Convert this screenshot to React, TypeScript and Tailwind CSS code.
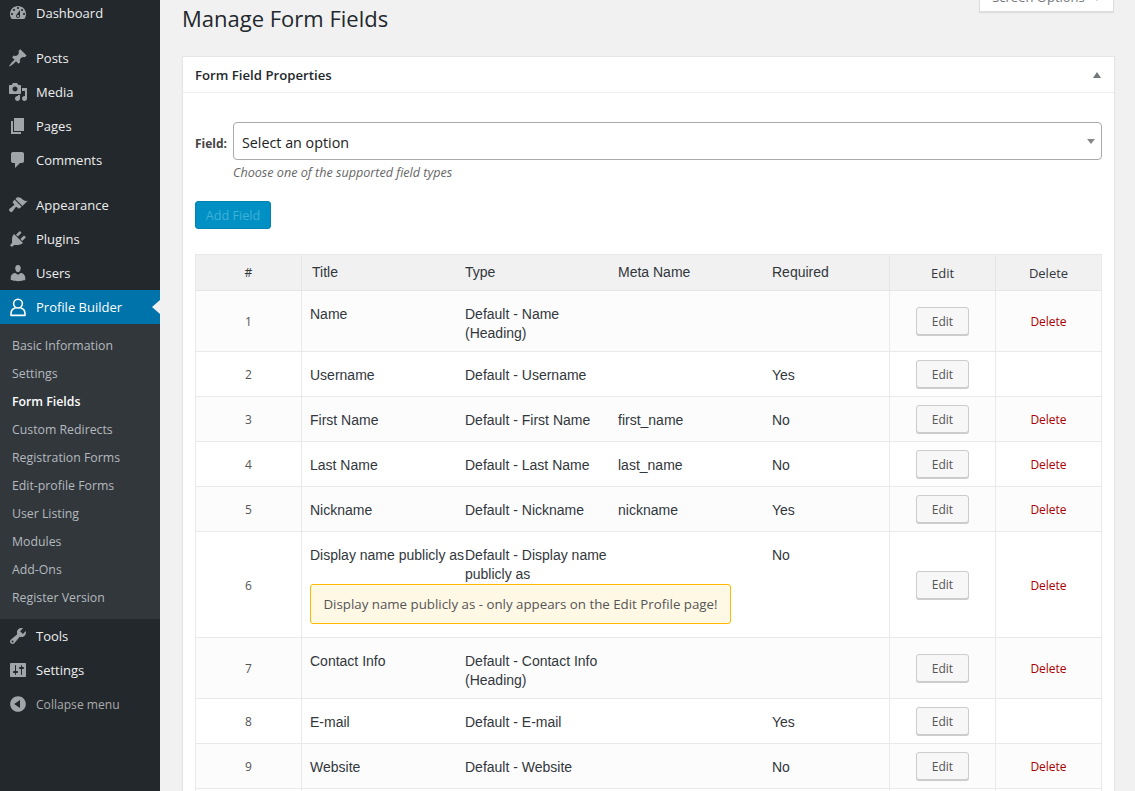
const icons = {
  dashboard: "M3.76 16h12.48c1.1-1.37 1.76-3.11 1.76-5 0-4.42-3.58-8-8-8s-8 3.58-8 8c0 1.89.66 3.63 1.76 5zM10 4c.55 0 1 .45 1 1s-.45 1-1 1-1-.45-1-1 .45-1 1-1zM6 6c.55 0 1 .45 1 1s-.45 1-1 1-1-.45-1-1 .45-1 1-1zm8 0c.55 0 1 .45 1 1s-.45 1-1 1-1-.45-1-1 .45-1 1-1zm-5.37 5.55L12 7v6c0 1.1-.9 2-2 2s-2-.9-2-2c0-.57.24-1.08.63-1.45zM4 10c.55 0 1 .45 1 1s-.45 1-1 1-1-.45-1-1 .45-1 1-1zm12 0c.55 0 1 .45 1 1s-.45 1-1 1-1-.45-1-1 .45-1 1-1zm-5 3c0-.55-.45-1-1-1s-1 .45-1 1 .45 1 1 1 1-.45 1-1z",
  posts: "M10.44 3.02l1.82-1.82 6.36 6.35-1.83 1.82c-1.05-.68-2.48-.57-3.41.36l-.75.75c-.92.93-1.04 2.35-.35 3.41l-1.83 1.82-2.41-2.41-2.8 2.79c-.42.42-3.38 2.71-3.8 2.29s1.86-3.39 2.28-3.81l2.79-2.79L4.1 9.36l1.83-1.82c1.05.69 2.48.57 3.4-.36l.75-.75c.93-.92 1.05-2.35.36-3.41z",
  media: "M13 11V4c0-.55-.45-1-1-1h-1.67L9 1H5L3.67 3H2c-.55 0-1 .45-1 1v7c0 .55.45 1 1 1h10c.55 0 1-.45 1-1zM7 4.5c1.38 0 2.5 1.12 2.5 2.5S8.38 9.5 7 9.5 4.5 8.38 4.5 7 5.62 4.5 7 4.5zM14 6h5v10.5c0 1.38-1.12 2.5-2.5 2.5S14 17.88 14 16.5s1.12-2.5 2.5-2.5c.17 0 .34.02.5.05V9h-3V6zm-4 8.05V13h2v3.5c0 1.38-1.12 2.5-2.5 2.5S7 17.88 7 16.5 8.12 14 9.5 14c.17 0 .34.02.5.05z",
  pages: "M6 15V2h10v13H6zm-1 1h8v2H3V5h2v11z",
  comments: "M5 2h9c1.1 0 2 .9 2 2v7c0 1.1-.9 2-2 2h-2l-5 5v-5H5c-1.1 0-2-.9-2-2V4c0-1.1.9-2 2-2z",
  appearance: "M14.48 11.06L7.41 3.99l1.5-1.5c.5-.56 2.3-.47 3.51.32 1.21.8 1.43 1.28 2.91 2.1 1.18.64 2.45 1.26 4.45.85zm-.71.71L6.7 4.7 4.93 6.47c-.39.39-.39 1.02 0 1.41l1.06 1.06c.39.39.39 1.03 0 1.42-.6.6-1.43 1.11-2.21 1.69-.35.26-2.2 1.7-2.4 1.9-.5.5-.5 1.4 0 1.9l.9.9c.5.5 1.4.5 1.9 0 .2-.2 1.5-1.9 1.8-2.3.58-.78 1.08-1.6 1.69-2.21.39-.39 1.02-.39 1.41 0l1.06 1.06c.39.39 1.02.39 1.41 0z",
  plugins: "M13.11 4.36L9.87 7.6 8 5.73l3.24-3.24c.35-.34 1.05-.2 1.56.32.52.51.66 1.21.31 1.55zm-8 1.77l.91-1.12 9.01 9.01-1.19.84c-.71.71-2.63 1.16-3.82 1.16H6.14L4.9 17.26c-.59.59-1.54.59-2.12 0-.59-.58-.59-1.53 0-2.12l1.24-1.24v-3.88c0-1.13.4-3.19 1.09-3.89zm7.26 3.97l3.24-3.24c.34-.35 1.04-.21 1.55.31.52.51.66 1.21.31 1.55l-3.24 3.25z",
  users: "M10 9.25c-2.27 0-2.73-3.44-2.73-3.44C7 4.02 7.82 2 9.97 2c2.16 0 2.98 2.02 2.71 3.81 0 0-.41 3.44-2.68 3.44zm0 2.57L12.72 10c2.39 0 4.52 2.33 4.52 4.53v2.49s-3.65 1.13-7.24 1.13c-3.65 0-7.24-1.13-7.24-1.13v-2.49c0-2.25 1.94-4.48 4.47-4.48z",
  tools: "M16.68 9.77c-1.34 1.34-3.3 1.67-4.95.99l-5.41 6.52c-.99.99-2.59.99-3.58 0s-.99-2.59 0-3.57l6.52-5.42c-.68-1.65-.35-3.61.99-4.95 1.28-1.28 3.12-1.62 4.72-1.06l-2.89 2.89 2.82 2.82 2.86-2.87c.53 1.58.18 3.39-1.08 4.65zM3.81 16.21c.4.39 1.04.39 1.43 0 .4-.4.4-1.04 0-1.43-.39-.4-1.03-.4-1.43 0-.39.39-.39 1.03 0 1.43z",
  settings: "M18 16V4c0-.55-.45-1-1-1H3c-.55 0-1 .45-1 1v12c0 .55.45 1 1 1h14c.55 0 1-.45 1-1zM8 11h1c.55 0 1 .45 1 1s-.45 1-1 1H8v1.5c0 .28-.22.5-.5.5s-.5-.22-.5-.5V13H6c-.55 0-1-.45-1-1s.45-1 1-1h1V5.5c0-.28.22-.5.5-.5s.5.22.5.5V11zm5-2h-1c-.55 0-1-.45-1-1s.45-1 1-1h1V5.5c0-.28.22-.5.5-.5s.5.22.5.5V7h1c.55 0 1 .45 1 1s-.45 1-1 1h-1v5.5c0 .28-.22.5-.5.5s-.5-.22-.5-.5V9z",
  collapse: "M10 2.16c4.33 0 7.84 3.51 7.84 7.84s-3.51 7.84-7.84 7.84S2.16 14.33 2.16 10 5.71 2.16 10 2.16zm2 11.72V6.12L6.18 9.97z",
};

type IconName = keyof typeof icons;

const MenuIcon = ({ name }: { name: IconName }) => (
  <svg width="20" height="20" viewBox="0 0 20 20" fill="#a0a5aa" className="shrink-0">
    <path d={icons[name]} />
  </svg>
);

const MenuItem = ({ icon, label }: { icon: IconName; label: string }) => (
  <div className="flex h-[34px] items-center gap-2 pl-2 text-[13px] text-[#eeeeee]">
    <MenuIcon name={icon} />
    <span className="pt-[2px]">{label}</span>
  </div>
);

const subItems = [
  "Basic Information",
  "Settings",
  "Form Fields",
  "Custom Redirects",
  "Registration Forms",
  "Edit-profile Forms",
  "User Listing",
  "Modules",
  "Add-Ons",
  "Register Version",
];

type Field = {
  id: number;
  title: string;
  type: string[];
  meta?: string;
  required?: string;
  noDelete?: boolean;
  height: string;
  note?: string;
};

const fields: Field[] = [
  { id: 1, title: "Name", type: ["Default - Name", "(Heading)"], height: "h-[61px]" },
  { id: 2, title: "Username", type: ["Default - Username"], required: "Yes", noDelete: true, height: "h-[45px]" },
  { id: 3, title: "First Name", type: ["Default - First Name"], meta: "first_name", required: "No", height: "h-[45px]" },
  { id: 4, title: "Last Name", type: ["Default - Last Name"], meta: "last_name", required: "No", height: "h-[45px]" },
  { id: 5, title: "Nickname", type: ["Default - Nickname"], meta: "nickname", required: "Yes", height: "h-[45px]" },
  {
    id: 6,
    title: "Display name publicly as",
    type: ["Default - Display name", "publicly as"],
    required: "No",
    height: "h-[106px]",
    note: "Display name publicly as - only appears on the Edit Profile page!",
  },
  { id: 7, title: "Contact Info", type: ["Default - Contact Info", "(Heading)"], height: "h-[61px]" },
  { id: 8, title: "E-mail", type: ["Default - E-mail"], required: "Yes", noDelete: true, height: "h-[45px]" },
  { id: 9, title: "Website", type: ["Default - Website"], required: "No", height: "h-[45px]" },
];

const FieldRow = ({ field, odd }: { field: Field; odd: boolean }) => (
  <div className={`flex border-b border-[#e9e9e9] ${field.height} ${odd ? "bg-[#fcfcfc]" : "bg-white"}`}>
    <div className="flex w-[106px] items-center justify-center border-r border-[#e9e9e9] pt-[2px] text-[12px] text-[#555555]">
      {field.id}
    </div>
    <div className="flex w-[587px] flex-col pt-[14px] font-['Liberation_Sans',sans-serif] text-[14px] leading-[19px] text-[#32373c]">
      <div className="grid grid-cols-[155px_153px_154px_125px]">
        <div className="whitespace-nowrap pl-2">{field.title}</div>
        <div className="pl-2">
          {field.type.map((line) => (
            <div key={line} className="whitespace-nowrap">{line}</div>
          ))}
        </div>
        <div className="pl-2">{field.meta}</div>
        <div className="pl-2">{field.required}</div>
      </div>
      {field.note && (
        <div className="ml-2 flex h-[40px] w-[421px] items-center justify-center rounded-[3px] border border-[#ffb900] bg-[#fff8e5] font-['Open_Sans',sans-serif] text-[13.3px] text-[#555555]">
          {field.note}
        </div>
      )}
    </div>
    <div className="flex w-[106px] items-center justify-center border-l border-[#e9e9e9]">
      <button className="h-[28px] w-[53px] rounded-[3px] border border-[#cccccc] bg-[#f7f7f7] pt-px text-[12px] text-[#555555] shadow-[0_1px_0_#cccccc]">
        Edit
      </button>
    </div>
    <div className="flex w-[106px] items-center justify-center border-l border-[#e9e9e9] pt-[2px] text-[12px] text-[#aa0000]">
      {!field.noDelete && "Delete"}
    </div>
  </div>
);

export default function App() {
  return (
    <div className="flex h-screen overflow-hidden bg-[#f1f1f1] font-['Open_Sans',sans-serif] text-[13px] text-[#444444]">
      {/* Admin menu */}
      <aside className="w-40 shrink-0 bg-[#23282d]">
        <div className="-mt-1 mb-[11px]">
          <MenuItem icon="dashboard" label="Dashboard" />
        </div>
        <MenuItem icon="posts" label="Posts" />
        <MenuItem icon="media" label="Media" />
        <MenuItem icon="pages" label="Pages" />
        <MenuItem icon="comments" label="Comments" />
        <div className="mt-[11px]">
          <MenuItem icon="appearance" label="Appearance" />
        </div>
        <MenuItem icon="plugins" label="Plugins" />
        <MenuItem icon="users" label="Users" />

        <div className="relative flex h-[34px] items-center gap-2 bg-[#0073aa] pl-2 text-[13px] text-white">
          <svg width="20" height="20" viewBox="0 0 20 20" fill="none" stroke="white" strokeWidth="1.6" className="shrink-0">
            <circle cx="10" cy="6.6" r="4.4" />
            <path d="M3 18.4v-1.6c0-3 2-5.2 4-5.8M17 18.4v-1.6c0-3-2-5.2-4-5.8M3 18.4h14" strokeLinecap="round" />
          </svg>
          <span className="pt-[2px]">Profile Builder</span>
          <div className="absolute right-0 top-[10px] h-0 w-0 border-y-[7px] border-r-[8px] border-y-transparent border-r-[#f1f1f1]" />
        </div>
        <div className="bg-[#32373c] pb-2 pt-[7px]">
          {subItems.map((item) => (
            <div
              key={item}
              className={`flex h-[28px] items-center pl-3 pt-[3px] text-[12.3px] ${
                item === "Form Fields" ? "font-semibold text-white" : "text-[#b4b9be]"
              }`}
            >
              {item}
            </div>
          ))}
        </div>

        <MenuItem icon="tools" label="Tools" />
        <MenuItem icon="settings" label="Settings" />
        <div className="flex h-[34px] items-center gap-2 pl-2 text-[12.1px] text-[#aaaaaa]">
          <MenuIcon name="collapse" />
          <span className="pt-[2px]">Collapse menu</span>
        </div>
      </aside>

      {/* Page content */}
      <main className="ml-[22px] mr-5 min-w-0 flex-1">
        <div className="flex h-[56px] items-start justify-between">
          <h1 className="pt-[2px] text-[22px] leading-[32px] text-[#23282d]">Manage Form Fields</h1>
          <div className="-mt-[16px] mr-px flex h-[28px] w-[135px] items-center justify-center gap-2 border border-[#dddddd] bg-white text-[13px] text-[#72777c] shadow-[0_1px_1px_rgba(0,0,0,0.08)]">
            <span>Screen Options</span>
            <span className="h-0 w-0 border-x-[4px] border-t-[5px] border-x-transparent border-t-[#a0a5aa]" />
          </div>
        </div>

        <section className="border border-[#e5e5e5] bg-white shadow-[0_1px_1px_rgba(0,0,0,0.04)]">
          <div className="flex h-[36px] items-center justify-between border-b border-[#eeeeee] pl-3 pr-[13px]">
            <h2 className="pt-[3px] text-[13.2px] font-semibold text-[#23282d]">Form Field Properties</h2>
            <span className="h-0 w-0 border-x-[4px] border-b-[6px] border-x-transparent border-b-[#72777c]" />
          </div>

          <div className="px-3 pt-[29px]">
            <div className="flex items-center">
              <label className="w-[38px] pt-[5px] text-[12px] font-bold text-[#444444]">Field:</label>
              <div className="flex h-[38px] flex-1 items-center justify-between rounded-[4px] border border-[#aaaaaa] pl-2 pr-[6px] text-[14.3px] text-[#222222]">
                <span className="pt-[3px]">Select an option</span>
                <span className="h-0 w-0 border-x-[4px] border-t-[5px] border-x-transparent border-t-[#888888]" />
              </div>
            </div>
            <p className="ml-[38px] mt-[3px] text-[12.6px] italic leading-[19px] text-[#666666]">
              Choose one of the supported field types
            </p>

            <button
              disabled
              className="mt-[19px] h-[28px] w-[76px] rounded-[3px] border border-[#0083b1] bg-[#0090c4] pt-[2px] text-[12.7px] text-[#3fb0d8]"
            >
              Add Field
            </button>

            <div className="mt-[25px] border-x border-t border-[#e9e9e9]">
              <div className="flex h-[36px] border-b border-[#e5e5e5] bg-[#f1f1f1] text-[#32373c]">
                <div className="flex w-[106px] items-center justify-center border-r border-[#e5e5e5] text-[12px]">#</div>
                <div className="grid w-[587px] grid-cols-[155px_153px_154px_125px] items-center font-['Liberation_Sans',sans-serif] text-[14px]">
                  <div className="pl-[10px]">Title</div>
                  <div className="pl-2">Type</div>
                  <div className="pl-2">Meta Name</div>
                  <div className="pl-2">Required</div>
                </div>
                <div className="flex w-[106px] items-center justify-center border-l border-[#e5e5e5] pt-[3px]">Edit</div>
                <div className="flex w-[106px] items-center justify-center border-l border-[#e5e5e5] pt-[3px]">Delete</div>
              </div>

              {fields.map((field) => (
                <FieldRow key={field.id} field={field} odd={field.id % 2 === 1} />
              ))}

              <div className="flex h-[12px] bg-white">
                <div className="w-[106px] border-r border-[#e9e9e9]" />
                <div className="w-[587px]" />
                <div className="w-[106px] border-l border-[#e9e9e9]" />
                <div className="w-[106px] border-l border-[#e9e9e9]" />
              </div>
            </div>
          </div>
        </section>
      </main>
    </div>
  );
}
